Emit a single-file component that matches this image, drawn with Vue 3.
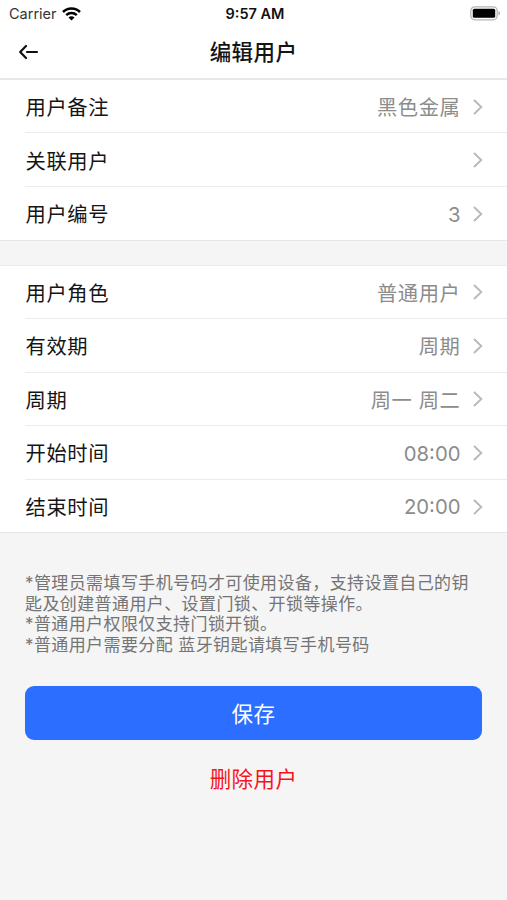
<script setup>
const groups = [
  [
    { label: '用户备注', value: '黑色金属' },
    { label: '关联用户', value: '' },
    { label: '用户编号', value: '3', latin: true },
  ],
  [
    { label: '用户角色', value: '普通用户' },
    { label: '有效期', value: '周期' },
    { label: '周期', value: '周一 周二' },
    { label: '开始时间', value: '08:00', latin: true },
    { label: '结束时间', value: '20:00', latin: true },
  ],
]
const notes = [
  '*管理员需填写手机号码才可使用设备，支持设置自己的钥匙及创建普通用户、设置门锁、开锁等操作。',
  '*普通用户权限仅支持门锁开锁。',
  '*普通用户需要分配 蓝牙钥匙请填写手机号码',
]
</script>

<template>
  <main class="screen">
    <div class="status">
      <div class="carrier">
        <span>Carrier</span>
        <svg class="wifi" width="19" height="14" viewBox="0 0 19 14" fill="none" stroke="#000" stroke-width="2.5">
          <path d="M1 5C5.600.4 13.400.4 18 5" />
          <path d="M4.200 8.200C7.200 5.400 11.800 5.400 14.800 8.200" />
          <path d="M6.500 10.400C8.100 9 10.900 9 12.500 10.400L9.500 13.500Z" fill="#000" stroke="none" />
        </svg>
      </div>
      <span class="clock">9:57 AM</span>
      <div class="power">
        <svg width="31" height="15" viewBox="0 0 31 15">
          <rect x=".8" y=".8" width="26.400" height="13" rx="4" fill="#fff" stroke="#b5b5b5" stroke-width="1.300" />
          <rect x="2.800" y="2.800" width="22.400" height="9" rx="1.500" fill="#000" />
          <path d="M28.500 5.200C30.500 5.900 30.500 8.700 28.500 9.400Z" fill="#aaa" />
        </svg>
      </div>
    </div>
    <header class="nav">
      <svg class="back" width="20" height="16" viewBox="0 0 20 16" fill="none" stroke="#111" stroke-width="2.200" stroke-linecap="round" stroke-linejoin="round">
        <path d="M7 2L1.200 8L7 14M8 8H18" />
      </svg>
      <h1>编辑用户</h1>
    </header>
    <section v-for="(rows, i) in groups" :key="i" class="group">
      <div v-for="row in rows" :key="row.label" class="row">
        <span class="label">{{ row.label }}</span>
        <span class="value" :class="{ latin: row.latin }">{{ row.value }}</span>
        <svg class="chevron" width="10" height="16" viewBox="0 0 10 16" fill="none" stroke="#b9b9b9" stroke-width="1.900">
          <path d="M1 1L8.300 8L1 15" />
        </svg>
      </div>
    </section>
    <div class="notes">
      <p v-for="note in notes" :key="note">{{ note }}</p>
    </div>
    <button class="save">保存</button>
    <button class="remove">删除用户</button>
  </main>
</template>

<style>
body {
  background: #f5f5f5;
}
</style>

<style scoped>
.screen {
  width: 507px;
  height: 900px;
  overflow: hidden;
  background: #f5f5f5;
  font-family: Inter, "Noto Sans CJK SC", sans-serif;
  color: #151515;
}
.status {
  display: grid;
  grid-template-columns: 1fr auto 1fr;
  align-items: center;
  height: 27px;
  padding: 0 6px 0 9px;
  background: #fff;
  font-size: 14.5px;
}
.carrier {
  display: flex;
  align-items: center;
  gap: 5px;
  color: #333;
}
.clock {
  font-weight: 600;
  color: #111;
}
.power {
  display: flex;
  justify-content: flex-end;
}
.nav {
  display: grid;
  grid-template-columns: 1fr auto 1fr;
  align-items: center;
  box-sizing: border-box;
  height: 53px;
  padding: 0 19px 2px;
  background: #fff;
  border-bottom: 2px solid #e8e8e8;
}
h1 {
  margin: 0;
  font-size: 21.5px;
  line-height: 30px;
  font-weight: 500;
  letter-spacing: 0.4px;
}
.group {
  background: #fff;
  border-bottom: 1px solid #e6e6e6;
}
.group + .group {
  margin-top: 24px;
  border-top: 1px solid #ebebeb;
}
.row {
  display: flex;
  align-items: center;
  box-sizing: border-box;
  height: 53.6px;
  margin-left: 25px;
  padding: 1.2px 24px 0 0;
}
.row:first-child {
  height: 52.4px;
}
.row + .row {
  border-top: 1px solid #ebebeb;
}
.label,
.value {
  padding-top: 2.6px;
  font-size: 20.3px;
  line-height: 28px;
  letter-spacing: 0.6px;
}
.label {
  padding-left: 0.5px;
}
.value {
  margin-left: auto;
  margin-right: 12.5px;
  color: #8c8c8c;
}
.value.latin {
  padding-top: 1.6px;
  letter-spacing: 0;
}
.notes {
  padding: 40px 25px 0;
  font-size: 17px;
  line-height: 20.4px;
  letter-spacing: 0.4px;
  color: #747474;
}
.notes p {
  margin: 0;
}
button {
  display: block;
  border: 0;
  padding: 0;
  font-family: inherit;
  font-size: 21.5px;
  letter-spacing: 0.4px;
}
.save {
  width: 457px;
  height: 54px;
  margin: 31px 25px 0;
  border-radius: 9px;
  background: #2c6eff;
  color: #fff;
}
.remove {
  margin: 23px auto 0;
  line-height: 32px;
  background: none;
  color: #f5141c;
}
</style>
